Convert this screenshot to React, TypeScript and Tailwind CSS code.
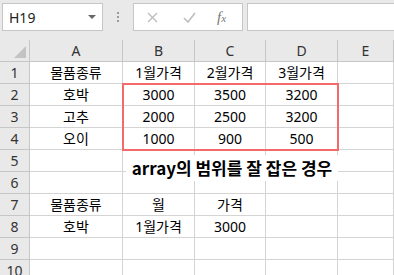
import { Fragment } from 'react';

const COLS = ['A', 'B', 'C', 'D', 'E'];

const ROWS: string[][] = [
  ['물품종류', '1월가격', '2월가격', '3월가격', ''],
  ['호박', '3000', '3500', '3200', ''],
  ['고추', '2000', '2500', '3200', ''],
  ['오이', '1000', '900', '500', ''],
  ['', '', '', '', ''],
  ['', '', '', '', ''],
  ['물품종류', '월', '가격', '', ''],
  ['호박', '1월가격', '3000', '', ''],
  ['', '', '', '', ''],
  ['', '', '', '', ''],
];

const FONT = { fontFamily: '"Noto Sans", "Noto Sans CJK KR", sans-serif' };

export default function App() {
  return (
    <div className="w-[394px] h-[275px] overflow-hidden bg-white text-[#111]" style={FONT}>
      {/* 수식 입력줄 */}
      <div className="h-[40px] bg-[#e9e9e9] flex items-start pt-[3px] pl-[2px]">
        <div className="w-[101px] h-[28px] bg-white border border-[#c6c6c6] flex items-center justify-between pl-[6px] pr-[6px]">
          <span className="text-[14px] text-[#222]">H19</span>
          <svg width="8" height="5" viewBox="0 0 8 5">
            <path d="M0 0h8L4 4z" fill="#666" />
          </svg>
        </div>
        <div className="w-[30px] h-[28px] flex flex-col items-center justify-center gap-[2px]">
          <span className="w-[2px] h-[2px] bg-[#9a9a9a]" />
          <span className="w-[2px] h-[2px] bg-[#9a9a9a]" />
          <span className="w-[2px] h-[2px] bg-[#9a9a9a]" />
        </div>
        <div className="w-[110px] h-[28px] bg-white border border-[#c6c6c6] flex items-center">
          <svg className="ml-[13px]" width="11" height="11" viewBox="0 0 11 11">
            <path d="M1 1l9 9M10 1l-9 9" stroke="#bdbdbd" strokeWidth="1.4" />
          </svg>
          <svg className="ml-[25px]" width="13" height="11" viewBox="0 0 13 11">
            <path d="M1 6l4 4 7-9" stroke="#bdbdbd" strokeWidth="1.6" fill="none" />
          </svg>
          <span
            className="ml-[21px] text-[15px] italic text-[#777] leading-none"
            style={{ fontFamily: '"Liberation Serif", serif' }}
          >
            f<span className="text-[11px]">x</span>
          </span>
        </div>
        <div className="ml-[4px] flex-1 h-[28px] bg-white border border-[#c6c6c6] border-r-0" />
      </div>

      {/* 시트 */}
      <div className="relative">
        <div className="grid grid-cols-[30px_93px_72px_71px_72px_1fr] auto-rows-[22px]">
          <div className="bg-[#e9e9e9] border-r border-b border-[#c6c6c6] relative">
            <svg className="absolute right-[3px] bottom-[3px]" width="12" height="12" viewBox="0 0 12 12">
              <path d="M12 0v12H0z" fill="#c3c3c3" />
            </svg>
          </div>
          {COLS.map((c) => (
            <div
              key={c}
              className="bg-[#e9e9e9] border-r border-b border-[#c6c6c6] flex items-center justify-center text-[14px] text-[#333]"
            >
              {c}
            </div>
          ))}
          {ROWS.map((row, i) => (
            <Fragment key={i}>
              <div className="bg-[#e9e9e9] border-r border-b border-[#c6c6c6] flex items-center justify-center text-[14px] text-[#333]">
                {i + 1}
              </div>
              {row.map((v, j) => (
                <div
                  key={j}
                  className="border-r border-b border-[#d4d4d4] flex items-center justify-center text-[14px] text-black whitespace-nowrap"
                >
                  {v}
                </div>
              ))}
            </Fragment>
          ))}
        </div>

        {/* 선택 범위 표시 */}
        <div className="absolute left-[122px] top-[43px] w-[217px] h-[68px] border-2 border-[#f36a6a]" />

        {/* 텍스트 상자 */}
        <div className="absolute left-[126px] top-[115px] w-[212px] h-[26px] bg-white flex items-center justify-center">
          <span
            className="text-[17px] font-bold text-black whitespace-nowrap"
            style={{ fontFamily: '"Noto Sans CJK KR", sans-serif' }}
          >
            array의 범위를 잘 잡은 경우
          </span>
        </div>
      </div>
    </div>
  );
}
